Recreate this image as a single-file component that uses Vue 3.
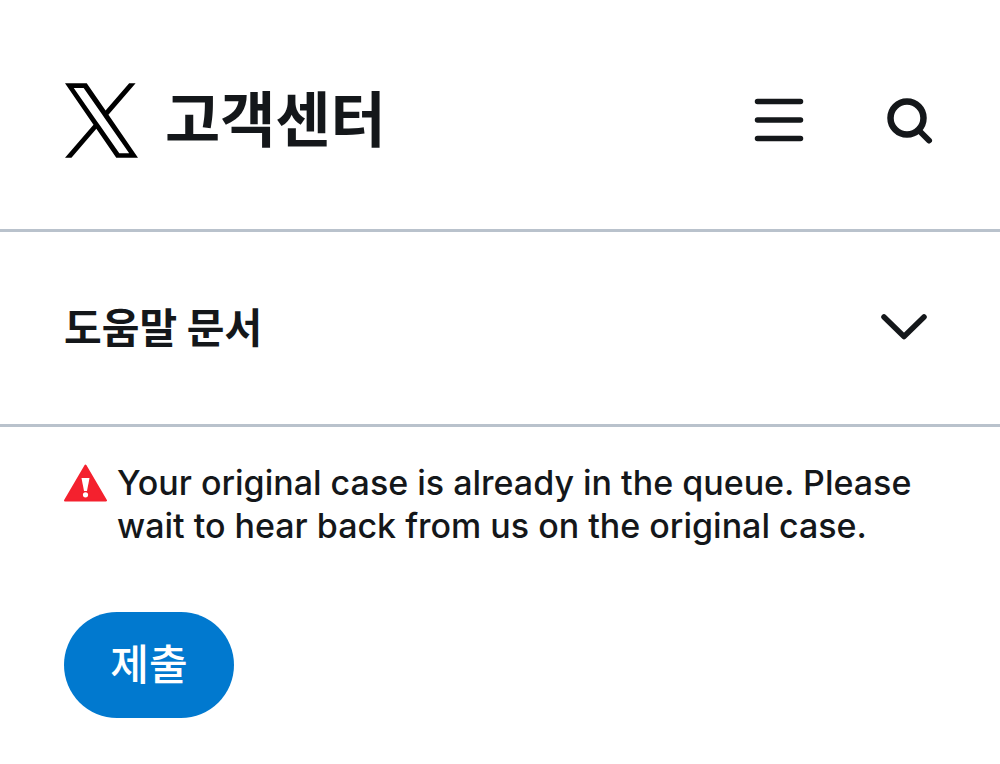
<script setup>
import { ref } from 'vue'

const articlesOpen = ref(false)
const submitted = ref(false)
</script>

<template>
  <div class="page">
    <header class="header">
      <a class="brand" href="#" aria-label="X 고객센터">
        <svg class="logo" viewBox="0 0 1200 1227" aria-hidden="true">
          <path
            d="M714.163 519.284L1160.89 0H1055.03L667.137 450.887L357.328 0H0L468.492 681.821L0 1226.37H105.866L515.491 750.218L842.672 1226.37H1200L714.137 519.284ZM569.165 687.828L521.697 619.934L144.011 79.694H306.615L611.412 515.685L658.88 583.579L1055.08 1150.3H892.476L569.165 687.854Z"
          />
        </svg>
        <span class="title">고객센터</span>
      </a>
      <nav class="tools">
        <button class="icon-button" type="button" aria-label="메뉴">
          <svg width="50" height="50" viewBox="0 0 50 50" aria-hidden="true">
            <path d="M3.5 6.5H46.5M3.5 25H46.5M3.5 43.5H46.5" stroke-width="5.5" />
          </svg>
        </button>
        <button class="icon-button" type="button" aria-label="검색">
          <svg width="50" height="50" viewBox="0 0 50 50" aria-hidden="true">
            <circle cx="23" cy="23" r="16.5" stroke-width="6.5" />
            <path d="M35 35.5L45 45.5" stroke-width="6" />
          </svg>
        </button>
      </nav>
    </header>

    <button
      class="articles"
      type="button"
      :aria-expanded="articlesOpen"
      @click="articlesOpen = !articlesOpen"
    >
      <span>도움말 문서</span>
      <svg width="50" height="30" viewBox="0 0 50 30" aria-hidden="true">
        <path d="M5 4L25 23.5L45 4" stroke-width="5.5" />
      </svg>
    </button>

    <form class="form" @submit.prevent="submitted = true">
      <p class="alert" role="alert">
        <svg class="warning" width="43" height="38" viewBox="0 0 43 38" aria-hidden="true">
          <path class="triangle" d="M21.5 1.5L42 36.5H1Z" />
          <path class="mark" d="M17.5 14H25.5L23 27H20Z" />
          <circle class="mark" cx="21.5" cy="30.8" r="2.6" />
        </svg>
        <span>Your original case is already in the queue. Please wait to hear back from us on the original case.</span>
      </p>
      <button class="submit" type="submit">제출</button>
    </form>
  </div>
</template>

<style>
body {
  margin: 0;
  background: #fff;
}
</style>

<style scoped>
.page {
  color: #14171a;
  font-family: Inter, "Noto Sans CJK KR", sans-serif;
}

button {
  border: 0;
  background: none;
  padding: 0;
  color: inherit;
  font-family: inherit;
  cursor: pointer;
}

svg {
  display: block;
  flex: none;
}

.header {
  display: flex;
  align-items: center;
  justify-content: space-between;
  box-sizing: border-box;
  min-height: 232px;
  padding: 11px 66px 0 65px;
  border-bottom: 3px solid #b9c2cc;
}

.brand {
  display: flex;
  align-items: center;
  gap: 27px;
  color: inherit;
  text-decoration: none;
}

.logo {
  width: 73px;
  height: 75px;
  fill: #000;
}

.title {
  font-size: 60px;
  font-weight: 700;
  line-height: 76px;
}

.tools {
  display: flex;
  gap: 80px;
}

.icon-button svg,
.articles svg {
  fill: none;
  stroke: currentColor;
  stroke-linecap: round;
  stroke-linejoin: round;
}

.articles {
  display: flex;
  align-items: center;
  justify-content: space-between;
  box-sizing: border-box;
  width: 100%;
  min-height: 195px;
  padding: 0 71px 0 64px;
  border-bottom: 3px solid #b9c2cc;
  font-size: 41px;
  font-weight: 700;
  line-height: 60px;
}

.form {
  padding: 34px 64px 46px;
}

.alert {
  display: flex;
  align-items: flex-start;
  gap: 10px;
  margin: 0 0 65px;
  font-size: 34px;
  font-weight: 500;
  line-height: 43px;
}

.warning {
  margin-top: 3px;
}

.triangle {
  fill: #f4212e;
  stroke: #f4212e;
  stroke-width: 2;
  stroke-linejoin: round;
}

.mark {
  fill: #fff;
}

.submit {
  min-width: 170px;
  height: 106px;
  padding: 0 46px;
  border-radius: 53px;
  background: #0179cf;
  color: #fff;
  font-size: 42px;
  font-weight: 500;
  line-height: 60px;
}
</style>
